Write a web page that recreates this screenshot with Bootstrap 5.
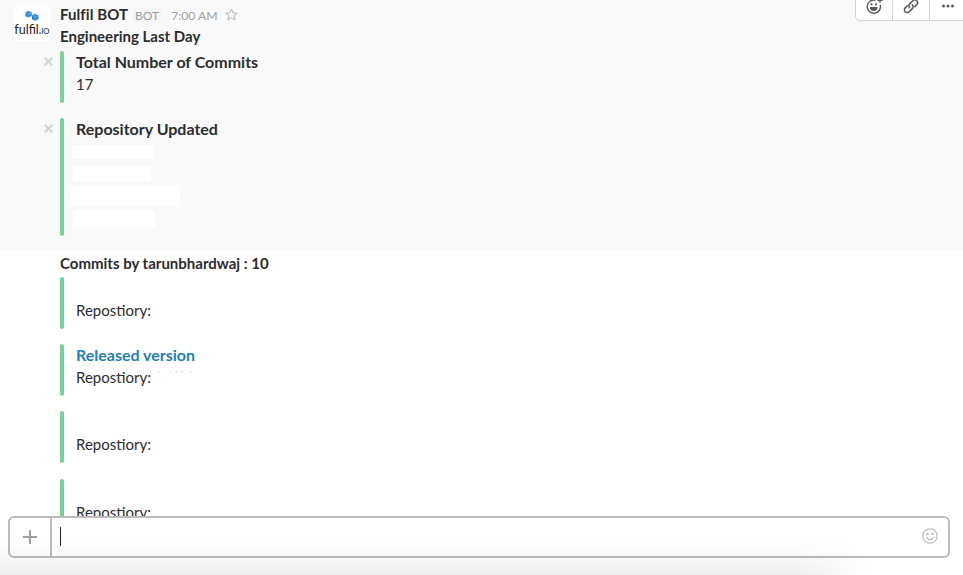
<!DOCTYPE html>
<html lang="en">
<head>
<meta charset="utf-8">
<meta name="viewport" content="width=device-width, initial-scale=1">
<title>Fulfil BOT</title>
<link href="https://cdn.jsdelivr.net/npm/bootstrap@5.3.0/dist/css/bootstrap.min.css" rel="stylesheet">
<style>
body{font-family:Lato,"Liberation Sans",sans-serif;font-size:15px;line-height:22px;color:#2c2d30;height:575px}
.app{height:575px}
.msg{padding-left:60px}
.msg-first{background:#f9f9f9;height:251px;padding-top:3px}
.msg-next{padding-top:1px;height:266px}
.avatar{left:14px;top:5px;width:36px;height:36px;border-radius:4px}
.msg-head{height:22px}
.name{letter-spacing:.07px}
.bot-tag{font-size:12px;color:#9e9ea6;background:#f5f5f6;border-radius:2px;padding:0 2px;margin-left:5px;line-height:15px}
.stamp{font-size:12.200px;color:#9e9ea6;margin-left:10px}
.star{margin-left:7px}
.attach{min-height:52px;margin-bottom:15px}
.attach-first{margin-top:4px}
.attach-by{margin-top:3px}
.attach-last{margin-top:16px}
.bar{width:4px;background:#78d19c;border-radius:2px;margin-right:12px}
.ttl{font-size:16px;line-height:22px;height:22px}
.release{color:#1f80b5}
.dismiss{left:-16px;top:6px}
.masks{height:96px;padding-top:5px}
.mask{background:#fff}
.m1{width:81px;height:14px;margin-left:-4px}
.m2{width:78px;height:15px;margin:7px 0 0 -3px}
.m3{width:109px;height:19px;margin:5px 0 0 -5px}
.m4{width:82px;height:17px;margin:5px 0 0 -3px}
.remnant{margin:4px 0 0 7px}
.tools{left:855px;top:-9px;height:30px;border:1px solid #d4d4d4;border-radius:5px;background:#fff}
.tool{width:37px}
.tool:first-child{width:36px}
.tool+.tool{border-left:1px solid #d4d4d4}
.foot{height:59px;margin-top:-1px;padding:0 13px 0 8px}
.shade{left:0;bottom:0;width:880px;height:45px;background:linear-gradient(to bottom,rgba(0,0,0,0),rgba(0,0,0,.012) 40%,rgba(0,0,0,.065));-webkit-mask-image:linear-gradient(to right,#000 90%,transparent 99%);mask-image:linear-gradient(to right,#000 90%,transparent 99%);pointer-events:none}
.composer{height:42px;border:2px solid #bbb;border-radius:6px;background:#fff}
.plus{width:42px;border-right:2px solid #bbb}
.caret{width:1px;height:19px;background:#222;margin:0 0 2px 8px}
.smile{margin:0 10px 2px 0}
</style>
<script src="https://cdn.jsdelivr.net/npm/bootstrap@5.3.0/dist/js/bootstrap.bundle.min.js"></script>
</head>
<body class="overflow-hidden bg-white">
<main class="app position-relative overflow-hidden d-flex flex-column">
  <section class="msg msg-first position-relative flex-shrink-0">
    <svg class="avatar position-absolute" viewBox="0 0 36 36" role="img" aria-label="fulfil.io">
      <rect width="36" height="36" rx="4" fill="#fff"/>
      <path d="M11.500 7l3-1 3.200 1.300v3.800L14.700 12.500l-3.200-1.300zM18 10l3-1 3.500 1.300v3.800l-3 1.700-3.500-1.500z" fill="#2583d0"/>
      <path d="M11.800 7.200l3 1.300 2.600-.8M14.800 8.500v3.500M18.300 10.200l3 1.400 3-1M21.300 11.600v3.800" stroke="#9dcbed" stroke-width=".6" fill="none"/>
      <text x=".3" y="29.300" font-size="13" fill="#222" textLength="24.500" lengthAdjust="spacingAndGlyphs">fulfil</text>
      <text x="24.600" y="29.300" font-size="12" font-weight="700" fill="#2583d0">.</text>
      <text x="27.200" y="29.300" font-size="8" fill="#222" textLength="8.300" lengthAdjust="spacingAndGlyphs">IO</text>
    </svg>
    <header class="msg-head d-flex align-items-baseline">
      <strong class="name">Fulfil BOT</strong><span class="bot-tag">BOT</span><span class="stamp">7:00 AM</span>
      <svg class="star align-self-center" width="13" height="13" viewBox="0 0 13 13" fill="none" stroke="#b5b5ba" stroke-linejoin="round"><path d="M6.500 1l1.600 3.900 4.200.3-3.300 2.600 1.100 4.200-3.600-2.300L2.900 12 4 7.800.7 5.200l4.200-.3z"/></svg>
    </header>
    <div class="fw-bold">Engineering Last Day</div>
    <div class="attach attach-first d-flex position-relative">
      <svg class="dismiss position-absolute" width="9" height="9" viewBox="0 0 8 8" stroke="#d3d3d3" stroke-width="1.800"><path d="M.7.7l6.600 6.600M7.300.7L.7 7.300"/></svg>
      <div class="bar"></div><div><div class="ttl fw-bold">Total Number of Commits</div><div>17</div></div>
    </div>
    <div class="attach d-flex position-relative">
      <svg class="dismiss position-absolute" width="9" height="9" viewBox="0 0 8 8" stroke="#d3d3d3" stroke-width="1.800"><path d="M.7.7l6.600 6.600M7.300.7L.7 7.300"/></svg>
      <div class="bar"></div>
      <div><div class="ttl fw-bold">Repository Updated</div>
        <div class="masks d-flex flex-column"><div class="mask m1"></div><div class="mask m2"></div><div class="mask m3"></div><div class="mask m4"></div></div></div>
    </div>
    <div class="tools position-absolute d-flex">
      <div class="tool d-flex align-items-center justify-content-center"><svg width="18" height="18" viewBox="0 0 18 18" fill="none" stroke="#55565a" stroke-width="1.400"><path d="M10.500 3.300A6.600 6.600 0 1 0 15.200 8M15 .8v5M12.500 3.300h5"/><path d="M4.800 10h7.800a3.900 3.900 0 0 1-7.800 0z" fill="#55565a" stroke="none"/><circle cx="6.500" cy="7.300" r="1.100" fill="#55565a" stroke="none"/><circle cx="10.900" cy="7.300" r="1.100" fill="#55565a" stroke="none"/></svg></div>
      <div class="tool d-flex align-items-center justify-content-center"><svg width="16" height="16" viewBox="0 0 16 16" fill="none" stroke="#55565a" stroke-width="1.500" stroke-linecap="round"><path d="M6.700 9.800a2.700 2.700 0 0 1 0-3.900l3.200-3.200a2.700 2.700 0 0 1 3.900 3.900L11.700 8.700M9.300 6.700a2.700 2.700 0 0 1 0 3.900l-3.200 3.200a2.700 2.700 0 0 1-3.900-3.900L4.300 7.800"/></svg></div>
      <div class="tool d-flex align-items-center justify-content-center"><svg width="14" height="4" viewBox="0 0 14 4" fill="#55565a"><circle cx="2.500" cy="2" r="1.500"/><circle cx="7" cy="2" r="1.500"/><circle cx="11.500" cy="2" r="1.500"/></svg></div>
    </div>
  </section>
  <section class="msg msg-next flex-shrink-0 overflow-hidden">
    <div class="fw-bold">Commits by tarunbhardwaj : 10</div>
    <div class="attach attach-by d-flex"><div class="bar"></div><div><div class="ttl"></div><div>Repostiory:</div></div></div>
    <div class="attach d-flex"><div class="bar"></div><div><div class="ttl fw-bold release">Released version</div><div class="d-flex align-items-start">Repostiory:<svg class="remnant" width="36" height="2" viewBox="0 0 36 2" fill="#dadada"><path d="M0 1h2v1H0zM11 1h2v1h-2zM17 1h3v1h-3zM23 1h2v1h-2zM32 1h2v1h-2z"/></svg></div></div></div>
    <div class="attach d-flex"><div class="bar"></div><div><div class="ttl"></div><div>Repostiory:</div></div></div>
    <div class="attach attach-last d-flex"><div class="bar"></div><div><div class="ttl"></div><div>Repostiory:</div></div></div>
  </section>
  <footer class="foot flex-shrink-0 position-relative">
    <div class="composer d-flex align-items-stretch">
      <div class="plus d-flex align-items-center justify-content-center"><svg width="14" height="14" viewBox="0 0 14 14" stroke="#a0a0a2" stroke-width="2"><path d="M7 0v14M0 7h14"/></svg></div>
      <div class="d-flex flex-grow-1 align-items-center"><div class="caret"></div></div>
      <svg class="smile align-self-center" width="16" height="16" viewBox="0 0 16 16" fill="none" stroke="#bdbdbf" stroke-width="1.300"><circle cx="8" cy="8" r="7.200"/><path d="M4.300 9.300c1.500 3.200 5.900 3.200 7.400 0"/><g fill="#bdbdbf" stroke="none"><circle cx="5.500" cy="6" r="1.300"/><circle cx="10.500" cy="6" r="1.300"/></g></svg>
    </div>
    <div class="shade position-absolute"></div>
  </footer>
</main>
</body>
</html>
